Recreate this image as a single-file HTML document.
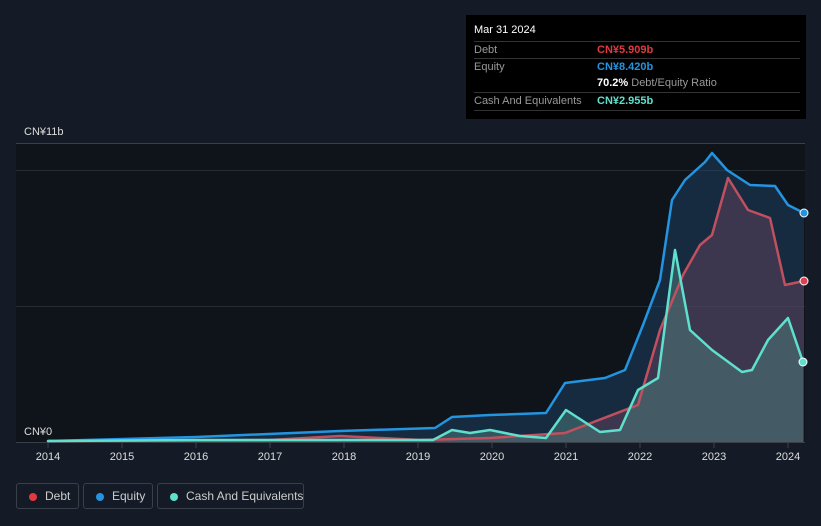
<!DOCTYPE html>
<html><head><meta charset="utf-8"><style>
html,body{margin:0;padding:0;background:#151b26;width:821px;height:526px;overflow:hidden;font-family:"Liberation Sans","Noto Sans CJK SC",sans-serif}
svg{position:absolute;left:0;top:0}
.tt{position:absolute;left:466px;top:15px;width:340px;height:104px;background:#000;color:#fff;font-size:11px}
.row{position:absolute;left:8px;right:6px;border-top:1px solid #333;height:17px;line-height:17px;color:#999;white-space:nowrap}
.row span{position:absolute;left:123px;font-weight:bold}
.leg{position:absolute;top:483px;height:26px;border:1px solid #3a404a;border-radius:3px;color:#ccc;font-size:12px;line-height:26px;box-sizing:border-box;white-space:nowrap}
.leg i{position:absolute;left:12px;top:9px;width:8px;height:8px;border-radius:50%}
.leg span{position:absolute;left:28px;top:-1px}
</style></head><body>
<svg width="821" height="526">
<rect x="16" y="143" width="789" height="300" fill="#0f131a"/>
<line x1="16" y1="143.5" x2="805" y2="143.5" stroke="#3a3f48"/>
<line x1="16" y1="170.5" x2="805" y2="170.5" stroke="#262b33"/>
<line x1="16" y1="306.5" x2="805" y2="306.5" stroke="#262b33"/>
<line x1="16" y1="442.5" x2="805" y2="442.5" stroke="#3a3f48"/>
<g stroke="#3a3f48">
<line x1="48" y1="443" x2="48" y2="448"/><line x1="122" y1="443" x2="122" y2="448"/><line x1="196" y1="443" x2="196" y2="448"/><line x1="270" y1="443" x2="270" y2="448"/><line x1="344" y1="443" x2="344" y2="448"/><line x1="418" y1="443" x2="418" y2="448"/><line x1="492" y1="443" x2="492" y2="448"/><line x1="566" y1="443" x2="566" y2="448"/><line x1="640" y1="443" x2="640" y2="448"/><line x1="714" y1="443" x2="714" y2="448"/><line x1="788" y1="443" x2="788" y2="448"/>
</g>
<path d="M48,441 L196,437 L340,431 L435,428 L452,417 L490,415 L546,413 L565,383 L605,378 L625,370 L643,325 L660,280 L672,200 L685,180 L705,162 L712,153 L727,170 L750,185 L775,186 L788,205 L804,213 L804,442 L48,442Z" fill="#1f4a6e" fill-opacity="0.45"/>
<path d="M48,441 L270,440 L340,436 L420,440 L490,438 L565,433 L638,405 L660,330 L683,275 L700,245 L712,235 L728,178 L748,210 L770,218 L785,285 L804,281 L804,442 L48,442Z" fill="#6b4560" fill-opacity="0.45"/>
<path d="M48,441 L196,440 L433,440 L452,430 L470,433 L490,430 L520,436 L546,438 L566,410 L600,432 L620,430 L638,390 L658,378 L675,250 L690,330 L712,350 L742,372 L752,370 L768,340 L788,318 L803,362 L803,442 L48,442Z" fill="#4a7a7a" fill-opacity="0.55"/>
<g fill="none" stroke-width="2.5" stroke-linejoin="round" stroke-linecap="round">
<path d="M48,441 L270,440 L340,436 L420,440 L490,438 L565,433 L638,405 L660,330 L683,275 L700,245 L712,235 L728,178 L748,210 L770,218 L785,285 L804,281" stroke="#c0505e"/>
<path d="M48,441 L196,437 L340,431 L435,428 L452,417 L490,415 L546,413 L565,383 L605,378 L625,370 L643,325 L660,280 L672,200 L685,180 L705,162 L712,153 L727,170 L750,185 L775,186 L788,205 L804,213" stroke="#2394e0"/>
<path d="M48,441 L196,440 L433,440 L452,430 L470,433 L490,430 L520,436 L546,438 L566,410 L600,432 L620,430 L638,390 L658,378 L675,250 L690,330 L712,350 L742,372 L752,370 L768,340 L788,318 L803,362" stroke="#5ee0cc"/>
</g>
<circle cx="804" cy="213" r="4" fill="#2394e0" stroke="#fff"/>
<circle cx="804" cy="281" r="4" fill="#e04050" stroke="#fff"/>
<circle cx="803" cy="362" r="4" fill="#5ee0cc" stroke="#fff"/>
<g fill="#ddd" font-size="11" text-anchor="middle">
<text x="48" y="460">2014</text><text x="122" y="460">2015</text><text x="196" y="460">2016</text><text x="270" y="460">2017</text><text x="344" y="460">2018</text><text x="418" y="460">2019</text><text x="492" y="460">2020</text><text x="566" y="460">2021</text><text x="640" y="460">2022</text><text x="714" y="460">2023</text><text x="788" y="460">2024</text>
</g>
<text x="24" y="135" fill="#ddd" font-size="11">CN¥11b</text>
<text x="24" y="435" fill="#ddd" font-size="11">CN¥0</text>
</svg>
<div class="tt">
<div style="position:absolute;left:8px;top:9px;font-size:11px">Mar 31 2024</div>
<div class="row" style="top:26px">Debt<span style="color:#e0393f">CN¥5.909b</span></div>
<div class="row" style="top:43px">Equity<span style="color:#2394e0">CN¥8.420b</span></div>
<div class="row" style="top:60px;border-top:none"><span style="color:#fff">70.2% <b style="color:#999;font-weight:normal">Debt/Equity Ratio</b></span></div>
<div class="row" style="top:77px;border-bottom:1px solid #333">Cash And Equivalents<span style="color:#5ee0cc">CN¥2.955b</span></div>
</div>
<div class="leg" style="left:16px;width:63px"><i style="background:#e0393f"></i><span>Debt</span></div>
<div class="leg" style="left:83px;width:70px"><i style="background:#2394e0"></i><span>Equity</span></div>
<div class="leg" style="left:157px;width:147px"><i style="background:#5ee0cc"></i><span>Cash And Equivalents</span></div>
</body></html>
